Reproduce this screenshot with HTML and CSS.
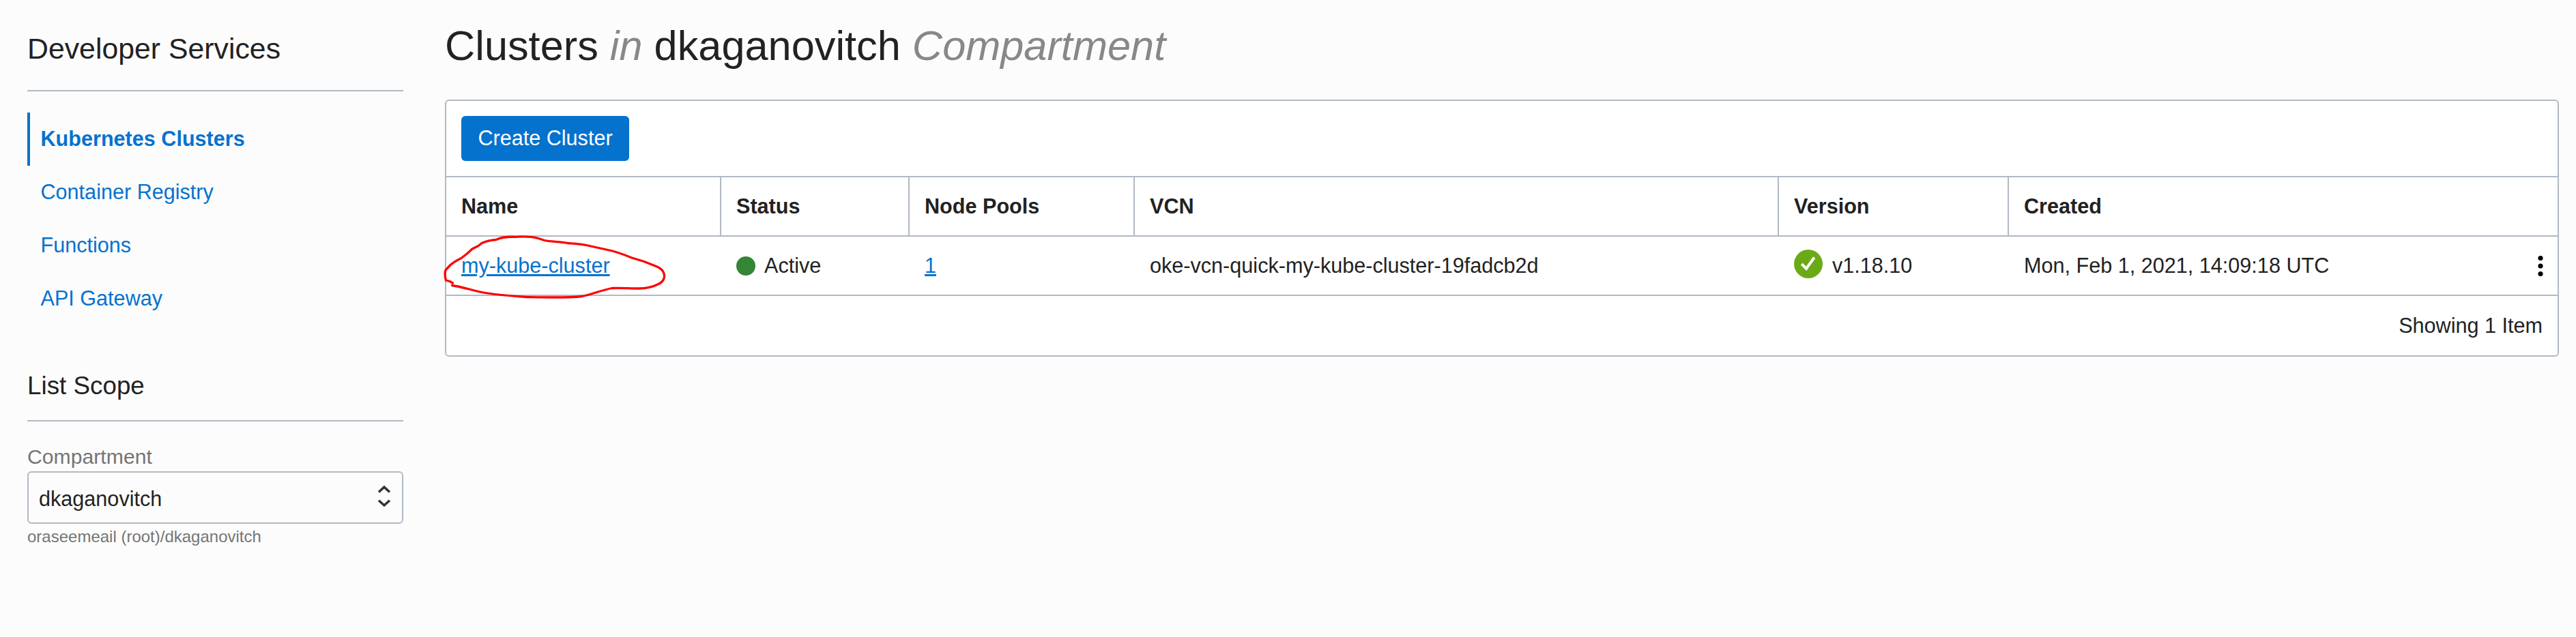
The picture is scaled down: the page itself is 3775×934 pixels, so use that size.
FILE: index.html
```html
<!DOCTYPE html>
<html lang="en">
<head>
<meta charset="utf-8">
<title>Clusters</title>
<link rel="stylesheet" href="styles.css">
</head>
<body>
<div class="page">
  <aside class="sidebar">
    <h2 class="side-title">Developer Services</h2>
    <nav class="nav">
      <a class="nav-item active">Kubernetes Clusters</a>
      <a class="nav-item">Container Registry</a>
      <a class="nav-item">Functions</a>
      <a class="nav-item">API Gateway</a>
    </nav>
    <h3 class="scope-title">List Scope</h3>
    <div class="label">Compartment</div>
    <div class="select">
      <span>dkaganovitch</span>
      <svg class="chevrons" width="22" height="42" viewBox="0 0 22 42"><path d="M3 14.500L11 7.200L19 14.500M3 26.700L11 34L19 26.700" fill="none" stroke="#333" stroke-width="3.500"/></svg>
    </div>
    <div class="hint">oraseemeail (root)/dkaganovitch</div>
  </aside>
  <main class="main">
    <h1 class="heading">Clusters <i>in</i> dkaganovitch <i>Compartment</i></h1>
    <section class="card">
      <div class="toolbar"><button class="create">Create Cluster</button></div>
      <div class="row head">
        <div>Name</div><div>Status</div><div>Node Pools</div><div>VCN</div><div>Version</div><div>Created</div>
      </div>
      <div class="row">
        <div class="name-cell"><a class="link">my-kube-cluster</a>
          <svg class="scribble" width="350" height="120" viewBox="0 0 350 120"><path d="M23.500 85L19 82.500L13.500 81C12 76 11.500 71 13 66L20 58.500C24 55 30 51.500 36 48.500L45 41.500L52 35L61 30.500L66 26.500C74 23 80 22 87 21.500C95 17.500 105 17 115 17.300C125 16.700 139 16.700 149 19.500L158 22.500C168 24.500 181 24.200 192 26.500C204 27.500 215 28 226 31L251 36.500C264 39 276 44 286 48L304 53.500L324 61.500C331 65 334 70 333.500 76C333 81 330 84 325 86.500C316 91 308 93 296 93C283 93 270 92 257 92.500C243 95 229 101 213 104.500C190 107 156 106 131 105.500C109 104 85 102 66 98.500C50 95 34 90 22.500 88.500" fill="none" stroke="#fe0000" stroke-width="3.300" stroke-linecap="round" stroke-linejoin="round"/></svg>
        </div>
        <div class="status"><span class="dot"></span>Active</div>
        <div><a class="link">1</a></div>
        <div>oke-vcn-quick-my-kube-cluster-19fadcb2d</div>
        <div class="version"><svg class="check" width="42" height="42" viewBox="0 0 42 42"><circle cx="21" cy="21" r="21" fill="#6aaa16"/><path d="M11.200 21L18 28L29.700 11.500" fill="none" stroke="#fff" stroke-width="4"/></svg>v1.18.10</div>
        <div class="created">Mon, Feb 1, 2021, 14:09:18 UTC
          <svg class="menu" width="8" height="32" viewBox="0 0 8 32"><circle cx="4" cy="4.500" r="3.600"/><circle cx="4" cy="16" r="3.600"/><circle cx="4" cy="27.500" r="3.600"/></svg>
        </div>
      </div>
      <div class="foot">Showing 1 Item</div>
    </section>
  </main>
</div>
</body>
</html>
```
FILE: styles.css
```css
* { box-sizing: border-box; }
body {
  margin: 0;
  background: #fcfcfc;
  color: #222;
  font-family: "Liberation Sans", Arial, sans-serif;
  font-size: 30.6px;
  line-height: 35px;
}
.page { display: flex; gap: 61px; height: 934px; padding: 0 25px 0 40px; }
.sidebar { width: 551px; flex: none; }
.side-title, .scope-title { margin: 0; font-weight: 400; border-bottom: 2px solid #b1b9c3; }
.side-title { height: 134px; padding-top: 46px; font-size: 42.8px; line-height: 50px; }
.nav { margin-top: 31px; }
.nav-item { display: flex; align-items: center; height: 78px; padding: 0 0 1px 19.5px; color: #0572ce; }
.nav-item.active { border-left: 4px solid #0572ce; padding-left: 15.5px; font-weight: 700; }
.scope-title { height: 75px; margin-top: 66px; margin-bottom: 35px; font-size: 36.8px; line-height: 44px; padding-top: 1px; }
.label { height: 38px; color: #757575; font-size: 30.2px; line-height: 33px; }
.select { display: flex; align-items: center; justify-content: space-between; height: 77px; border: 2px solid #b1b9c3; border-radius: 6px; padding: 4px 15px 0; }
.chevrons { margin-top: -8px; }
.hint { font-size: 24px; line-height: 28px; margin-top: 5px; color: #757575; }
.main { flex: 1; }
.heading { margin: 0; height: 146px; padding-top: 32px; font-size: 61.3px; line-height: 70px; font-weight: 400; }
.heading i { color: #888; }
.card { border: 2px solid #b1b9c3; border-radius: 6px; background: #fff; }
.toolbar { height: 110px; padding: 22px; }
.create { display: block; width: 246px; height: 66px; padding: 0 0 1px; border: 0; border-radius: 6px; background: #0572ce; color: #fff; font: inherit; }
.row { display: grid; grid-template-columns: 403px 276px 330px 944px 337px 1fr; height: 87px; border-top: 2px solid #b1b9c3; }
.row > div { display: flex; align-items: center; padding: 0 22px; }
.head { font-weight: 700; }
.head > div:not(:last-child) { border-right: 2px solid #b1b9c3; }
.link { color: #0572ce; text-decoration: underline; text-decoration-thickness: 3px; text-underline-offset: 2px; }
.name-cell { position: relative; }
.scribble { position: absolute; left: -14px; top: -17px; }
.dot { width: 28px; height: 28px; border-radius: 50%; background: #358537; margin-right: 13px; }
.check { margin-right: 14px; margin-top: -5px; }
.created { justify-content: space-between; }
.menu { margin-right: -1px; }
.foot { height: 89px; border-top: 2px solid #b1b9c3; padding: 0 22px; display: flex; align-items: center; justify-content: flex-end; }
```
